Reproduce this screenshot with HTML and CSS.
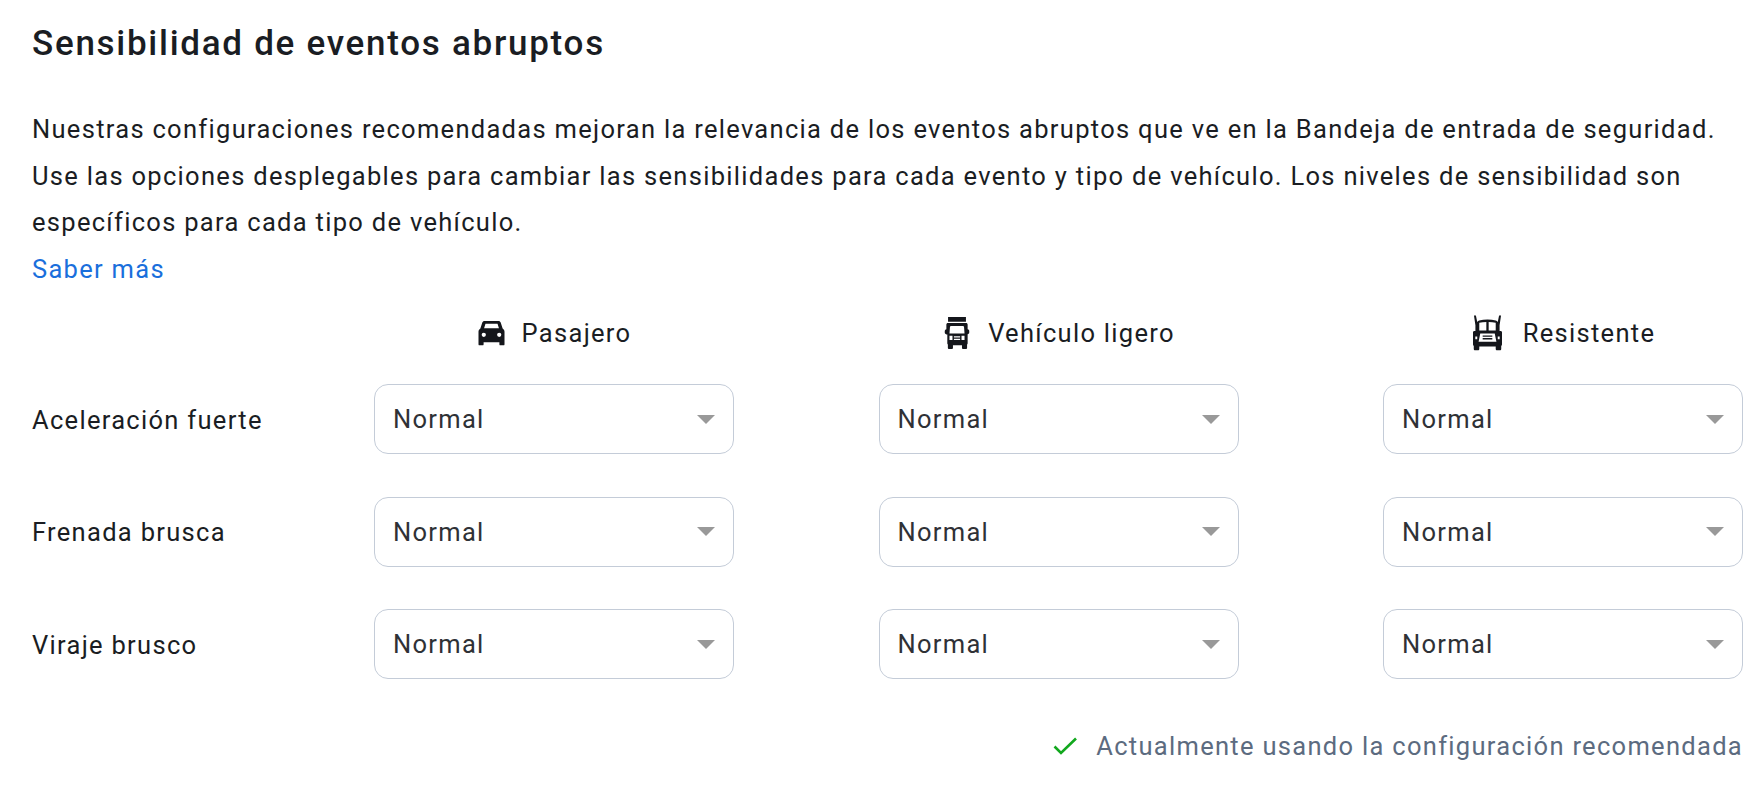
FILE: index.html
```html
<!DOCTYPE html>
<html lang="es">
<head>
<meta charset="utf-8">
<title>Sensibilidad de eventos abruptos</title>
<link rel="stylesheet" href="styles.css">
</head>
<body>
<main class="panel">
  <h1 class="title">Sensibilidad de eventos abruptos</h1>
  <p class="intro">Nuestras configuraciones recomendadas mejoran la relevancia de los eventos abruptos que ve en la Bandeja de entrada de seguridad. Use las opciones desplegables para cambiar las sensibilidades para cada evento y tipo de vehículo. Los niveles de sensibilidad son específicos para cada tipo de vehículo.</p>
  <a class="link" href="#">Saber más</a>
  <div class="matrix">
    <div></div>
    <div class="head">
      <svg class="veh car" viewBox="0 0 30 28"><path fill-rule="evenodd" d="M7.500 1h15c1.200 0 2 .6 2.400 1.700L27 9.200c1.300.8 2 2 2 3.500V26c0 .8-.5 1.300-1.300 1.300h-2.900c-.8 0-1.300-.5-1.300-1.300v-2H6.500v2c0 .8-.5 1.300-1.300 1.300H2.300C1.500 27.300 1 26.800 1 26V12.700c0-1.500.7-2.700 2-3.500l2.100-6.500C5.500 1.600 6.300 1 7.500 1zM8.500 4 7 9h16l-1.500-5zM6.700 13.600a2.300 2.300 0 1 0 0 4.600 2.300 2.300 0 0 0 0-4.600zM23.300 13.600a2.300 2.300 0 1 0 0 4.600 2.300 2.300 0 0 0 0-4.600z"/></svg>
      <span>Pasajero</span>
    </div>
    <div class="head">
      <svg class="veh van" viewBox="0 0 26 34"><path fill-rule="evenodd" d="M3.500 0h19v5h-19zM3.500 6.500h19c1.200 0 1.800.6 1.800 1.800v4.700c1 .1 1.700.7 1.700 1.800v1.700c0 1-.6 1.600-1.700 1.700V28c0 .6-.2 1-.6 1.300V33c0 .6-.4 1-1 1h-3.400c-.6 0-1-.4-1-1v-3H8.700v3c0 .6-.4 1-1 1H4.300c-.6 0-1-.4-1-1v-3.700c-.4-.3-.6-.7-.6-1.300V18.700C1.600 18.600 0 18 0 16.700V15c0-1.100 1-1.900 1.700-2V8.300c0-1.200.6-1.800 1.800-1.800zM7 9.500c-.9 0-1.400.4-1.500 1.300L5 17.500h16l-.5-6.700c-.1-.9-.6-1.300-1.500-1.300zM5 20v4.500h3.200V20zM17.800 20v4.500H21V20zM9.700 20.500v1.300h6.600v-1.300zM9.700 23.200v1.300h6.600v-1.300z"/></svg>
      <span>Vehículo ligero</span>
    </div>
    <div class="head">
      <svg class="veh truck" viewBox="0 0 30 36"><path fill-rule="evenodd" d="M1 0h2l1.400 6.500c.5-.8 1.200-1.300 2-1.500C9 4.400 12 4 15 4s6 .4 8.600 1c.8.200 1.500.7 2 1.500L27 0h2l-1.500 10v6h1c.9 0 1.500.6 1.500 1.500V30c0 .7-.3 1.200-.8 1.500V34.500c0 .8-.5 1.300-1.300 1.300h-3.100c-.8 0-1.300-.5-1.300-1.300V32H6.500v2.500c0 .8-.5 1.300-1.300 1.300H2.100c-.8 0-1.300-.5-1.300-1.300v-3c-.5-.3-.8-.8-.8-1.500V17.500c0-.9.6-1.500 1.500-1.500h1V10zM6.500 7.500v8h7.300V6.700c-2.600 0-5 .2-7.300.8zM16.200 6.700v8.800h7.300v-8c-2.300-.6-4.700-.8-7.300-.8zM7.500 18.500 5.800 27h18.400l-1.700-8.500zM10 20.700h10V22H10zM10 23.300h10v1.300H10zM2.400 21.500v3h2v-3zM25.600 21.500v3h2v-3z"/></svg>
      <span>Resistente</span>
    </div>

    <div class="label">Aceleración fuerte</div>
    <div class="select"><span>Normal</span><i class="caret"></i></div>
    <div class="select"><span>Normal</span><i class="caret"></i></div>
    <div class="select"><span>Normal</span><i class="caret"></i></div>

    <div class="label">Frenada brusca</div>
    <div class="select"><span>Normal</span><i class="caret"></i></div>
    <div class="select"><span>Normal</span><i class="caret"></i></div>
    <div class="select"><span>Normal</span><i class="caret"></i></div>

    <div class="label">Viraje brusco</div>
    <div class="select"><span>Normal</span><i class="caret"></i></div>
    <div class="select"><span>Normal</span><i class="caret"></i></div>
    <div class="select"><span>Normal</span><i class="caret"></i></div>
  </div>
  <div class="status">
    <svg class="check" viewBox="0 0 24 18"><path d="M1.500 9.500 8 16 23 1.500"/></svg>
    <span>Actualmente usando la configuración recomendada</span>
  </div>
</main>
</body>
</html>
```

FILE: styles.css
```css
* { box-sizing: border-box; }
html, body { margin: 0; background: #fff; }
body {
  font-family: "Roboto", "Liberation Sans", sans-serif;
  font-size: 25.5px;
  letter-spacing: 1.3px;
  color: #1a1d23;
  width: 1758px;
  height: 790px;
  overflow: hidden;
}
.panel { padding: 22px 15px 0 32px; }
.title {
  margin: 0;
  font-size: 35px;
  line-height: 44px;
  font-weight: 500;
  letter-spacing: 1.72px;
}
.intro {
  margin: 40px 0 0;
  line-height: 46.7px;
}
.link {
  display: block;
  color: #1a6fdc;
  line-height: 46px;
  text-decoration: none;
}
.matrix {
  display: grid;
  grid-template-columns: 197.5px 360px 360px 360px;
  grid-template-rows: 62px repeat(3, 112.5px);
  column-gap: 144.5px;
  margin-top: 10px;
}
.head {
  display: flex;
  align-items: center;
  justify-content: center;
  gap: 16px;
}
.veh { fill: #14161b; flex: none; }
.car { width: 29px; height: 26px; }
.van { width: 26px; height: 32px; margin: 0 2px 0 2px; }
.truck { width: 29px; height: 36px; margin: 0 5px 0 2px; }
.label {
  display: flex;
  align-items: center;
  white-space: nowrap;
  height: 70px;
  margin-top: 20.6px;
}
.select {
  display: flex;
  align-items: center;
  justify-content: space-between;
  height: 70px;
  margin-top: 20px;
  border: 1px solid #c4ccd8;
  border-radius: 14px;
  padding: 0 18px;
  color: #2f3136;
}
.caret {
  width: 0;
  height: 0;
  border-left: 9px solid transparent;
  border-right: 9px solid transparent;
  border-top: 9px solid #999;
}
.status {
  display: flex;
  justify-content: flex-end;
  align-items: center;
  gap: 19px;
  margin-top: 26px;
  color: #5c6b80;
  line-height: 36px;
}
.check { width: 24px; height: 18px; fill: none; stroke: #12a81e; stroke-width: 2.6; }
```
